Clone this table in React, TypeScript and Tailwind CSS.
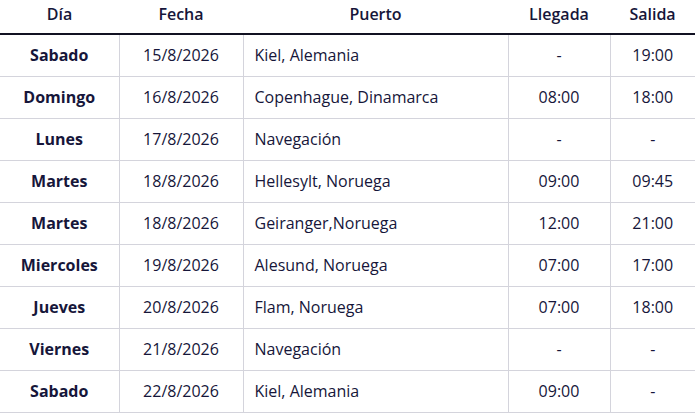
import React from "react";

const rows = [
  ["Sabado", "15/8/2026", "Kiel, Alemania", "-", "19:00"],
  ["Domingo", "16/8/2026", "Copenhague, Dinamarca", "08:00", "18:00"],
  ["Lunes", "17/8/2026", "Navegación", "-", "-"],
  ["Martes", "18/8/2026", "Hellesylt, Noruega", "09:00", "09:45"],
  ["Martes", "18/8/2026", "Geiranger,Noruega", "12:00", "21:00"],
  ["Miercoles", "19/8/2026", "Alesund, Noruega", "07:00", "17:00"],
  ["Jueves", "20/8/2026", "Flam, Noruega", "07:00", "18:00"],
  ["Viernes", "21/8/2026", "Navegación", "-", "-"],
  ["Sabado", "22/8/2026", "Kiel, Alemania", "09:00", "-"],
];

export default function App() {
  return (
    <div className="w-[699px] h-[416px] bg-white text-[#16163a] text-[16px]" style={{ fontFamily: '"Open Sans", sans-serif' }}>
      <table className="w-[695px] border-collapse table-fixed">
        <colgroup>
          <col className="w-[119px]" />
          <col className="w-[124px]" />
          <col className="w-[265px]" />
          <col className="w-[102px]" />
          <col className="w-[85px]" />
        </colgroup>
        <thead>
          <tr className="h-[34px] border-b-2 border-[#111122]">
            <th className="font-semibold text-center align-middle pb-[6px]">Día</th>
            <th className="font-semibold text-center align-middle pb-[6px]">Fecha</th>
            <th className="font-semibold text-center align-middle pb-[6px]">Puerto</th>
            <th className="font-semibold text-center align-middle pb-[6px]">Llegada</th>
            <th className="font-semibold text-center align-middle pb-[6px]">Salida</th>
          </tr>
        </thead>
        <tbody>
          {rows.map((r, i) => (
            <tr key={i} className="h-[42px] border-b border-[#d4d4dc]">
              <td className="text-center font-bold align-middle border-r border-[#d4d4dc]">{r[0]}</td>
              <td className="text-center align-middle border-r border-[#d4d4dc]">{r[1]}</td>
              <td className="text-left pl-[11px] align-middle border-r border-[#d4d4dc]">{r[2]}</td>
              <td className="text-center align-middle border-r border-[#d4d4dc]">{r[3]}</td>
              <td className="text-center align-middle">{r[4]}</td>
            </tr>
          ))}
        </tbody>
      </table>
    </div>
  );
}
